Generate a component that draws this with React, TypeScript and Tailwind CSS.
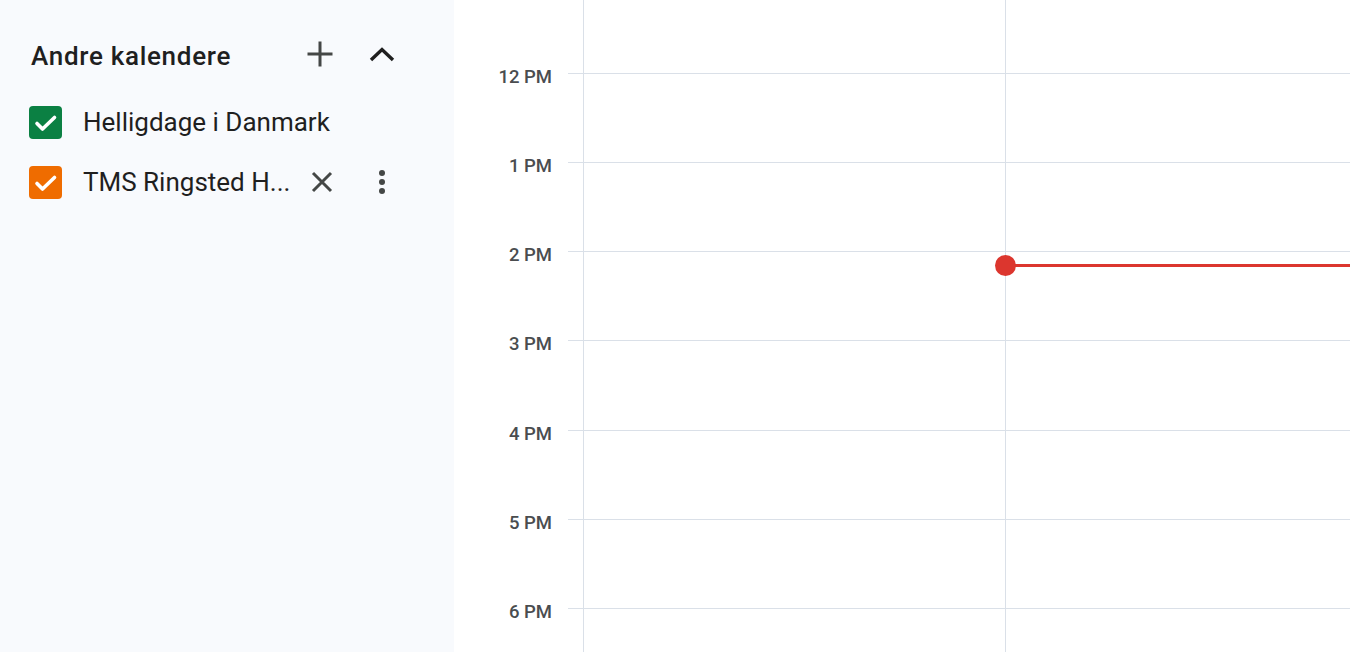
import React from "react";

const hours = ["12 PM", "1 PM", "2 PM", "3 PM", "4 PM", "5 PM", "6 PM"];

function Check() {
  return (
    <svg width="33" height="33" viewBox="0 0 33 33" className="block">
      <path d="M8 17.5 L13.5 23 L25.5 11.5" fill="none" stroke="#ffffff" strokeWidth="3.6" strokeLinecap="round" strokeLinejoin="round" />
    </svg>
  );
}

function Box({ color }: { color: string }) {
  return (
    <div className={`w-[33px] h-[33px] rounded-[4px] shrink-0 ${color}`}>
      <Check />
    </div>
  );
}

function DayColumn({ children, className }: { children?: React.ReactNode; className: string }) {
  return (
    <div className={`relative border-l border-[#dae0e8] flex flex-col ${className}`}>
      <div className="h-[73px] shrink-0" />
      {hours.map((h) => (
        <div key={h} className="h-[89.17px] shrink-0 border-t border-[#dae0e8]" />
      ))}
      {children}
    </div>
  );
}

export default function App() {
  return (
    <div
      className="w-[1350px] h-[652px] flex overflow-hidden bg-white"
      style={{ fontFamily: "Roboto, 'Noto Sans', Arial, sans-serif" }}
    >
      <aside className="w-[454px] shrink-0 bg-[#f8fafd] pt-[32px]">
        <div className="flex items-center h-[48px]">
          <span className="pl-[31px] w-[296px] text-[26px] font-medium text-[#1f1f1f] leading-none tracking-[0.7px]">
            Andre kalendere
          </span>
          <button className="w-[48px] h-[48px] flex items-center justify-center -mt-[4px]">
            <svg width="28" height="28" viewBox="0 0 28 28">
              <path d="M14 1.5 V26.5 M1.5 14 H26.5" stroke="#444746" strokeWidth="3" fill="none" />
            </svg>
          </button>
          <button className="ml-[14px] w-[48px] h-[48px] flex items-center justify-center -mt-[2px]">
            <svg width="26" height="16" viewBox="0 0 26 16">
              <path d="M2 13 L13 2.5 L24 13" stroke="#1f1f1f" strokeWidth="3.4" fill="none" />
            </svg>
          </button>
        </div>
        <div className="mt-[12px] flex items-center h-[60px] pl-[29px]">
          <Box color="bg-[#0b8043]" />
          <span className="ml-[21px] text-[26px] text-[#1f1f1f] leading-none">Helligdage i Danmark</span>
        </div>
        <div className="flex items-center h-[60px] pl-[29px]">
          <Box color="bg-[#ef6c00]" />
          <span className="ml-[21px] w-[209px] whitespace-nowrap text-[26px] text-[#1f1f1f] leading-[32px]">
            TMS Ringsted H...
          </span>
          <button className="ml-[6px] w-[48px] h-[48px] flex items-center justify-center">
            <svg width="22" height="22" viewBox="0 0 22 22">
              <path d="M2 2 L20 20 M20 2 L2 20" stroke="#444746" strokeWidth="3" fill="none" />
            </svg>
          </button>
          <button className="ml-[12px] w-[48px] h-[48px] flex items-center justify-center">
            <svg width="8" height="26" viewBox="0 0 8 26">
              <circle cx="4" cy="4" r="3" fill="#444746" />
              <circle cx="4" cy="13" r="3" fill="#444746" />
              <circle cx="4" cy="22" r="3" fill="#444746" />
            </svg>
          </button>
        </div>
      </aside>

      <main className="flex-1 flex h-[652px] overflow-hidden">
        <div className="w-[129px] shrink-0 flex flex-col">
          <div className="h-[73px] shrink-0" />
          {hours.map((h) => (
            <div key={h} className="h-[89.17px] shrink-0 flex items-start">
              <span className="w-[98px] text-right text-[18.5px] font-medium text-[#4a4d4f] leading-[20px] -mt-[6px]">
                {h}
              </span>
              <div className="ml-[16px] flex-1 border-t border-[#dae0e8]" />
            </div>
          ))}
        </div>
        <DayColumn className="w-[422px] shrink-0" />
        <DayColumn className="flex-1">
          <div className="absolute left-0 right-0 top-[264px] h-[3px] bg-[#dc362e]" />
          <div className="absolute left-[-11px] top-[255px] w-[21px] h-[21px] rounded-full bg-[#dc362e]" />
        </DayColumn>
      </main>
    </div>
  );
}
